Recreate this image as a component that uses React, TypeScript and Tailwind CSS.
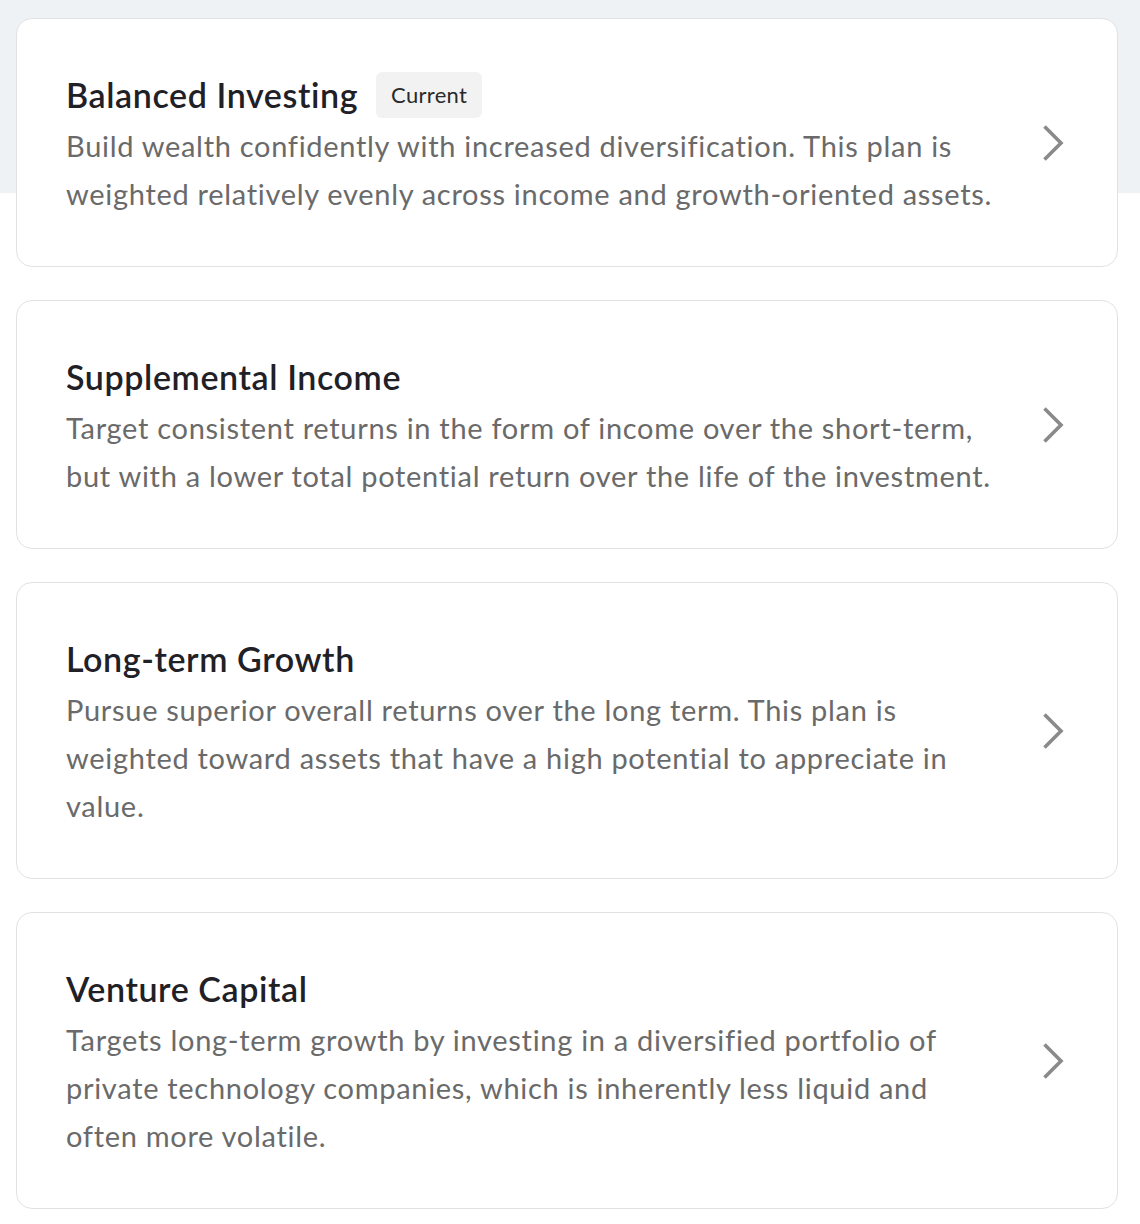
interface Plan {
    id: number;
    title: string;
    description: string;
    current?: boolean;
}

const plans: Plan[] = [
    {
        id: 1,
        title: "Balanced Investing",
        description:
            "Build wealth confidently with increased diversification. This plan is weighted relatively evenly across income and growth-oriented assets.",
        current: true,
    },
    {
        id: 2,
        title: "Supplemental Income",
        description:
            "Target consistent returns in the form of income over the short-term, but with a lower total potential return over the life of the investment.",
    },
    {
        id: 3,
        title: "Long-term Growth",
        description:
            "Pursue superior overall returns over the long term. This plan is weighted toward assets that have a high potential to appreciate in value.",
    },
    {
        id: 4,
        title: "Venture Capital",
        description:
            "Targets long-term growth by investing in a diversified portfolio of private technology companies, which is inherently less liquid and often more volatile.",
    },
];

const Chevron = () => (
    <svg width="22" height="36" viewBox="0 0 22 36" fill="none" className="ml-8 shrink-0">
        <polyline points="2.5,1.5 19,18 2.5,34.5" stroke="#8a8a8a" strokeWidth="3.6" strokeLinecap="butt" strokeLinejoin="miter" />
    </svg>
);

function PlanCard({ plan }: { plan: Plan }) {
    return (
        <div className="flex items-center rounded-2xl border border-[#e2e2e2] bg-white py-12 pl-[49px] pr-[53px] cursor-pointer">
            <div className="flex-1 min-w-0">
                <div className="flex h-[55px] items-center gap-[18px]">
                    <h3 className="text-[34px] font-semibold leading-none tracking-[0.6px] text-[#1f2126]">{plan.title}</h3>
                    {plan.current && (
                        <span className="flex h-[46px] items-center rounded-md bg-[#f2f2f2] px-[15px] text-[22px] tracking-[0.3px] text-[#2a2a2a]">
                            Current
                        </span>
                    )}
                </div>
                <p className="max-w-[935px] text-[29px] leading-[48px] tracking-[0.7px] text-[#6a6a6a]">{plan.description}</p>
            </div>
            <Chevron />
        </div>
    );
}

export default function App() {
    return (
        <div
            className="min-h-[1224px] w-full bg-[linear-gradient(to_bottom,#eef2f5_193px,#ffffff_193px)] pl-4 pr-[22px] pt-[18px] pb-4"
            style={{ fontFamily: "Lato, 'Noto Sans', sans-serif" }}
        >
            <div className="flex flex-col gap-[33px]">
                {plans.map((plan) => (
                    <PlanCard key={plan.id} plan={plan} />
                ))}
            </div>
        </div>
    );
}
